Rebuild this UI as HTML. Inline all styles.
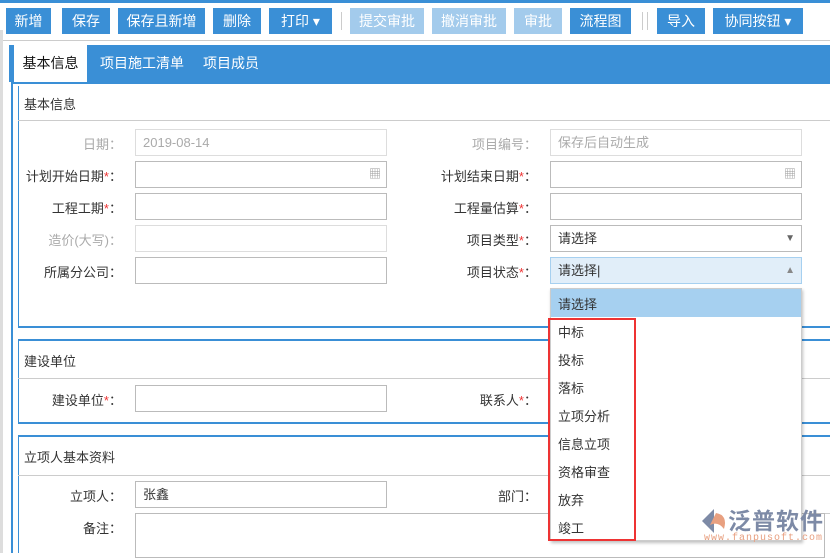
<!DOCTYPE html>
<html><head><meta charset="utf-8"><style>
*{box-sizing:border-box;margin:0;padding:0}
body{width:830px;height:553px;overflow:hidden;background:#fff;font-family:"Liberation Sans","Noto Sans CJK SC",sans-serif;font-size:13px;color:#333;position:relative}
.a{position:absolute}
.btn{position:absolute;top:8px;height:26px;background:#3a8fd6;color:#fff;font-size:14px;line-height:26px;text-align:center;white-space:nowrap}
.dis{background:#a3cbec}
.sep{position:absolute;top:12px;width:1px;height:18px;background:#ccc}
.tab{position:absolute;top:45px;height:37px;line-height:36px;font-size:14px;color:#fff;white-space:nowrap}
.lbl{position:absolute;width:110px;text-align:right;font-size:13px;color:#333}
.gray{color:#aaa}
.inp{position:absolute;height:27px;border:1px solid #bbb;background:#fff;font-size:13px;line-height:25px;padding-left:7px}
.inp.d{border-color:#ddd;color:#aaa}
.req{color:#e33}
.hline{position:absolute;left:18px;right:0;height:1px;background:#ccc}
.bline{position:absolute;left:11px;right:0;height:2px;background:#3a8fd6}
.item{position:absolute;left:558px;font-size:13px;color:#333}
</style></head><body>
<div class="a" style="left:0;top:0;width:830px;height:3px;background:#3a8fd6"></div>
<div class="btn" style="left:6px;width:45px">新增</div>
<div class="btn" style="left:62px;width:48px">保存</div>
<div class="btn" style="left:118px;width:87px">保存且新增</div>
<div class="btn" style="left:213px;width:48px">删除</div>
<div class="btn" style="left:269px;width:63px">打印 ▾</div>
<div class="sep" style="left:341px"></div>
<div class="btn dis" style="left:350px;width:74px">提交审批</div>
<div class="btn dis" style="left:432px;width:74px">撤消审批</div>
<div class="btn dis" style="left:514px;width:48px">审批</div>
<div class="btn" style="left:570px;width:61px">流程图</div>
<div class="sep" style="left:642px"></div><div class="sep" style="left:647px"></div>
<div class="btn" style="left:657px;width:48px">导入</div>
<div class="btn" style="left:713px;width:90px">协同按钮 ▾</div>
<div class="a" style="left:0;top:40px;width:830px;height:1px;background:#ccc"></div>
<div class="a" style="left:0;top:30px;width:3px;height:523px;background:#ddd"></div>

<div class="a" style="left:9px;top:45px;width:821px;height:37px;background:#3a8fd6"></div>
<div class="tab" style="left:14px;width:73px;background:#fff;color:#111;height:38px;text-align:center">基本信息</div>
<div class="tab" style="left:100px">项目施工清单</div>
<div class="tab" style="left:203px">项目成员</div>
<div class="a" style="left:11px;top:82px;width:2px;height:471px;background:#3a8fd6"></div>
<div class="a" style="left:11px;top:82px;width:819px;height:2px;background:#3a8fd6"></div>
<div class="a" style="left:18px;top:86px;width:1px;height:241px;background:#3a8fd6"></div>

<div class="a" style="left:24px;top:94px;font-size:13px">基本信息</div>
<div class="hline" style="top:120px"></div>

<div class="lbl gray" style="left:12px;top:134px">日期：</div>
<div class="inp d" style="left:135px;top:129px;width:252px">2019-08-14</div>
<div class="lbl" style="left:12px;top:166px">计划开始日期<span class="req">*</span>：</div>
<div class="inp" style="left:135px;top:161px;width:252px"><span class="a" style="right:5px;top:0;color:#999;font-size:12px">▦</span></div>
<div class="lbl" style="left:12px;top:198px">工程工期<span class="req">*</span>：</div>
<div class="inp" style="left:135px;top:193px;width:252px"></div>
<div class="lbl gray" style="left:12px;top:230px">造价(大写)：</div>
<div class="inp d" style="left:135px;top:225px;width:252px"></div>
<div class="lbl" style="left:12px;top:262px">所属分公司：</div>
<div class="inp" style="left:135px;top:257px;width:252px"></div>

<div class="lbl gray" style="left:427px;top:134px">项目编号：</div>
<div class="inp d" style="left:550px;top:129px;width:252px">保存后自动生成</div>
<div class="lbl" style="left:427px;top:166px">计划结束日期<span class="req">*</span>：</div>
<div class="inp" style="left:550px;top:161px;width:252px"><span class="a" style="right:5px;top:0;color:#999;font-size:12px">▦</span></div>
<div class="lbl" style="left:427px;top:198px">工程量估算<span class="req">*</span>：</div>
<div class="inp" style="left:550px;top:193px;width:252px"></div>
<div class="lbl" style="left:427px;top:230px">项目类型<span class="req">*</span>：</div>
<div class="inp" style="left:550px;top:225px;width:252px">请选择<span class="a" style="right:6px;top:0;color:#666;font-size:10px">▼</span></div>
<div class="lbl" style="left:427px;top:262px">项目状态<span class="req">*</span>：</div>
<div class="inp" style="left:550px;top:257px;width:252px;background:#e1eef9;border-color:#a6d0f0">请选择|<span class="a" style="right:6px;top:0;color:#888;font-size:10px">▲</span></div>

<div class="bline" style="top:326px;left:18px"></div>
<div class="bline" style="top:339px;left:18px"></div>
<div class="a" style="left:18px;top:340px;width:1px;height:84px;background:#3a8fd6"></div>
<div class="a" style="left:24px;top:351px">建设单位</div>
<div class="hline" style="top:378px"></div>
<div class="lbl" style="left:12px;top:390px">建设单位<span class="req">*</span>：</div>
<div class="inp" style="left:135px;top:385px;width:252px"></div>
<div class="lbl" style="left:427px;top:390px">联系人<span class="req">*</span>：</div>

<div class="bline" style="top:422px;left:18px"></div>
<div class="bline" style="top:435px;left:18px"></div>
<div class="a" style="left:18px;top:436px;width:1px;height:117px;background:#3a8fd6"></div>
<div class="a" style="left:24px;top:447px">立项人基本资料</div>
<div class="hline" style="top:475px"></div>
<div class="lbl" style="left:12px;top:486px">立项人：</div>
<div class="inp" style="left:135px;top:481px;width:252px">张鑫</div>
<div class="lbl" style="left:427px;top:486px">部门：</div>
<div class="hline" style="top:513px;left:400px"></div>
<div class="lbl" style="left:12px;top:518px">备注：</div>
<div class="inp" style="left:135px;top:513px;width:690px;height:45px"></div>

<div class="a" style="left:550px;top:288px;width:252px;height:253px;background:#fff;border:1px solid #ccc;box-shadow:1px 2px 3px rgba(0,0,0,.25)"></div>
<div class="a" style="left:551px;top:289px;width:250px;height:28px;background:#a6d0f0"></div>
<div class="item" style="top:294px">请选择</div>
<div class="item" style="top:322px">中标</div>
<div class="item" style="top:350px">投标</div>
<div class="item" style="top:378px">落标</div>
<div class="item" style="top:406px">立项分析</div>
<div class="item" style="top:434px">信息立项</div>
<div class="item" style="top:462px">资格审查</div>
<div class="item" style="top:490px">放弃</div>
<div class="item" style="top:518px">竣工</div>
<div class="a" style="left:548px;top:318px;width:88px;height:223px;border:2px solid #ee3333"></div>

<svg class="a" style="left:700px;top:507px" width="30" height="28" viewBox="0 0 30 28"><path d="M14 2 L2 14 L14 26 Z" fill="#7d8aa6"/><path d="M16 6 Q28 8 24 22 Q18 14 10 18 Z" fill="#e8a080"/></svg>
<div class="a" style="left:728px;top:505px;font-size:23px;color:#7d8aa6;font-family:'Noto Sans CJK SC',sans-serif;font-weight:bold;letter-spacing:1px;line-height:28px">泛普软件</div>
<div class="a" style="left:704px;top:533px;font-size:10px;color:#e8a080;font-family:'Liberation Mono',monospace;letter-spacing:1px;line-height:12px">www.fanpusoft.com</div>
</body></html>
